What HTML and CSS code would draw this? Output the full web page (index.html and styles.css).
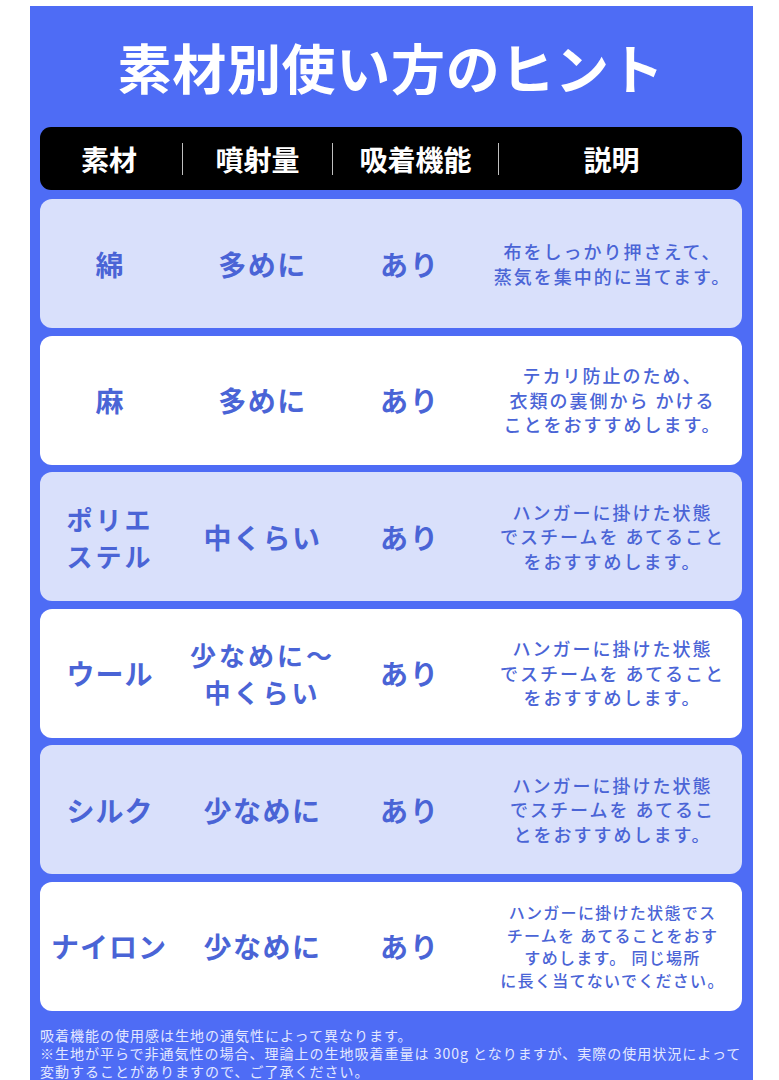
FILE: index.html
```html
<!DOCTYPE html>
<html lang="ja">
<head>
<meta charset="utf-8">
<title>素材別使い方のヒント</title>
<link rel="stylesheet" href="styles.css">
</head>
<body>
<div class="page">
  <main class="panel">
    <h1 class="title">素材別使い方のヒント</h1>
    <div class="head">
      <div class="hcell h1">素材</div>
      <div class="hcell h2">噴射量</div>
      <div class="hcell h3">吸着機能</div>
      <div class="hcell h4">説明</div>
    </div>
    <div class="rows">
      <div class="row tint">
        <div class="cell c1">綿</div>
        <div class="cell c2">多めに</div>
        <div class="cell c3">あり</div>
        <div class="cell c4">布をしっかり押さえて、<br>蒸気を集中的に当てます。</div>
      </div>
      <div class="row">
        <div class="cell c1">麻</div>
        <div class="cell c2">多めに</div>
        <div class="cell c3">あり</div>
        <div class="cell c4">テカリ防止のため、<br>衣類の裏側から かける<br>ことをおすすめします。</div>
      </div>
      <div class="row tint">
        <div class="cell c1 two">ポリエ<br>ステル</div>
        <div class="cell c2">中くらい</div>
        <div class="cell c3">あり</div>
        <div class="cell c4">ハンガーに掛けた状態<br>でスチームを あてること<br>をおすすめします。</div>
      </div>
      <div class="row">
        <div class="cell c1">ウール</div>
        <div class="cell c2 two">少なめに～<br>中くらい</div>
        <div class="cell c3">あり</div>
        <div class="cell c4">ハンガーに掛けた状態<br>でスチームを あてること<br>をおすすめします。</div>
      </div>
      <div class="row tint">
        <div class="cell c1">シルク</div>
        <div class="cell c2">少なめに</div>
        <div class="cell c3">あり</div>
        <div class="cell c4">ハンガーに掛けた状態<br>でスチームを あてるこ<br>とをおすすめします。</div>
      </div>
      <div class="row">
        <div class="cell c1 wide">ナイロン</div>
        <div class="cell c2">少なめに</div>
        <div class="cell c3">あり</div>
        <div class="cell c4 dense">ハンガーに掛けた状態でス<br>チームを あてることをおす<br>すめします。 同じ場所<br>に長く当てないでください。</div>
      </div>
    </div>
    <div class="note">
      <p>吸着機能の使用感は生地の通気性によって異なります。</p>
      <p>※生地が平らで非通気性の場合、理論上の生地吸着重量は 300g となりますが、実際の使用状況によって<br>変動することがありますので、ご了承ください。</p>
    </div>
  </main>
</div>
</body>
</html>
```
FILE: styles.css
```css
html, body {
  margin: 0;
  padding: 0;
  background: #ffffff;
}

body {
  font-family: "Noto Sans CJK JP", "Noto Sans", sans-serif;
}

.page {
  width: 779px;
  height: 1080px;
  overflow: hidden;
  padding-top: 6px;
  box-sizing: border-box;
}

.panel {
  margin-left: 30px;
  width: 723px;
  min-height: 1080px;
  background: #4e6cf5;
  padding: 0 11px 0 10px;
  box-sizing: border-box;
  display: flex;
  flex-direction: column;
}

.title {
  margin: 0;
  height: 121px;
  display: flex;
  align-items: center;
  justify-content: center;
  color: #ffffff;
  font-size: 54px;
  font-weight: 700;
  letter-spacing: 0.7px;
  box-sizing: border-box;
}

.head {
  height: 63px;
  background: #000000;
  border-radius: 11px;
  display: grid;
  grid-template-columns: 143px 150px 166px 1fr;
  align-items: center;
}

.hcell {
  color: #ffffff;
  font-size: 28px;
  font-weight: 700;
  text-align: center;
  line-height: 32px;
}

.h1, .h2, .h3 {
  border-right: 1px solid #bfbfbf;
}

.h1 {
  padding-right: 4px;
}

.h4 {
  padding-right: 18px;
}

.rows {
  display: flex;
  flex-direction: column;
  gap: 7.5px;
  margin-top: 9px;
}

.row {
  height: 129px;
  background: #ffffff;
  border-radius: 12px;
  display: grid;
  grid-template-columns: 140px 165px 130px 1fr;
  align-items: center;
}

.row.tint {
  background: #d9e0fb;
}

.cell {
  color: #4a64d6;
  text-align: center;
  font-weight: 700;
  font-size: 28px;
  letter-spacing: 1px;
  line-height: 36px;
}

.c1.two, .c2.two {
  font-size: 26px;
  letter-spacing: 3px;
  line-height: 37px;
}

.c1.wide {
  margin-left: -2px;
}

.c2 {
  letter-spacing: 1.5px;
}

.c3 {
  letter-spacing: 2px;
}

.c4 {
  font-size: 18px;
  font-weight: 500;
  letter-spacing: 2px;
  line-height: 24.5px;
  padding-left: 8px;
}

.c4.dense {
  font-size: 16px;
  letter-spacing: 1.3px;
  line-height: 22.5px;
}

.note {
  margin-top: 15px;
  color: #e3e8ff;
  font-size: 14px;
  line-height: 18px;
  letter-spacing: 1px;
}

.note p {
  margin: 0;
}
```
